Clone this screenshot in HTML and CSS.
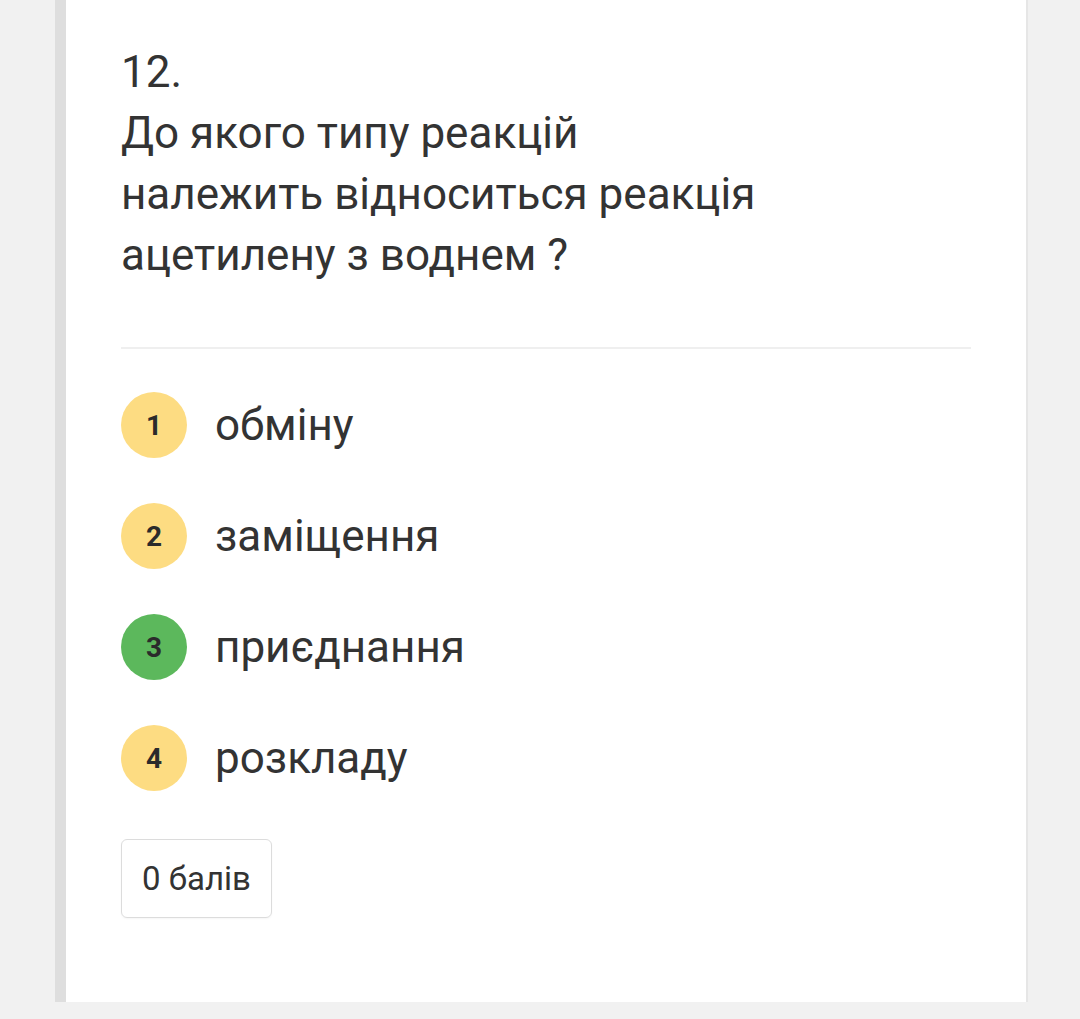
FILE: index.html
```html
<!DOCTYPE html>
<html lang="uk">

<head>
  <meta charset="UTF-8">
  <meta name="viewport" content="width=device-width, initial-scale=1.0">
  <title>Питання 12</title>
  <link rel="stylesheet" href="styles.css">
</head>

<body>
  <div class="page">
    <div class="card">
      <div class="question">
        <div class="question-num">12.</div>
        <div class="question-text">До якого типу реакцій<br>належить відноситься реакція<br>ацетилену з воднем ?</div>
      </div>
      <div class="divider"></div>
      <ul class="options">
        <li class="option">
          <span class="badge">1</span>
          <span class="option-text">обміну</span>
        </li>
        <li class="option">
          <span class="badge">2</span>
          <span class="option-text">заміщення</span>
        </li>
        <li class="option">
          <span class="badge badge-correct">3</span>
          <span class="option-text">приєднання</span>
        </li>
        <li class="option">
          <span class="badge">4</span>
          <span class="option-text">розкладу</span>
        </li>
      </ul>
      <div class="score">0 балів</div>
    </div>
  </div>
</body>

</html>
```
FILE: styles.css
```css
html,
body {
  margin: 0;
  padding: 0;
  background: #f1f1f1;
  font-family: Roboto, "Noto Sans", sans-serif;
  color: #333;
}

.page {
  padding: 0 52px 17px 55px;
}

.card {
  background: #fff;
  border-left: 11px solid #dedede;
  border-right: 2px solid #e6e6e6;
  padding: 42px 55px 0 55px;
  height: 1002px;
  box-sizing: border-box;
}

.question {
  font-size: 44px;
  line-height: 61px;
}

.divider {
  height: 2px;
  background: #efefef;
  margin-top: 61px;
}

.options {
  list-style: none;
  margin: 0;
  padding: 0;
  margin-top: 43px;
}

.option {
  display: flex;
  align-items: center;
  gap: 28px;
  height: 66px;
  margin-bottom: 45px;
}

.badge {
  width: 66px;
  height: 66px;
  border-radius: 50%;
  background: #fddc82;
  display: flex;
  align-items: center;
  justify-content: center;
  font-size: 28px;
  font-weight: 700;
  color: #2b2b2b;
  flex-shrink: 0;
}

.badge-correct {
  background: #5cb85c;
}

.option-text {
  font-size: 44px;
}

.score {
  display: inline-block;
  margin-top: 3px;
  padding: 0 20px;
  height: 77px;
  line-height: 77px;
  border: 1px solid #dcdcdc;
  border-radius: 6px;
  font-size: 33px;
  box-shadow: 0 1px 2px rgba(0, 0, 0, .04);
}
```
